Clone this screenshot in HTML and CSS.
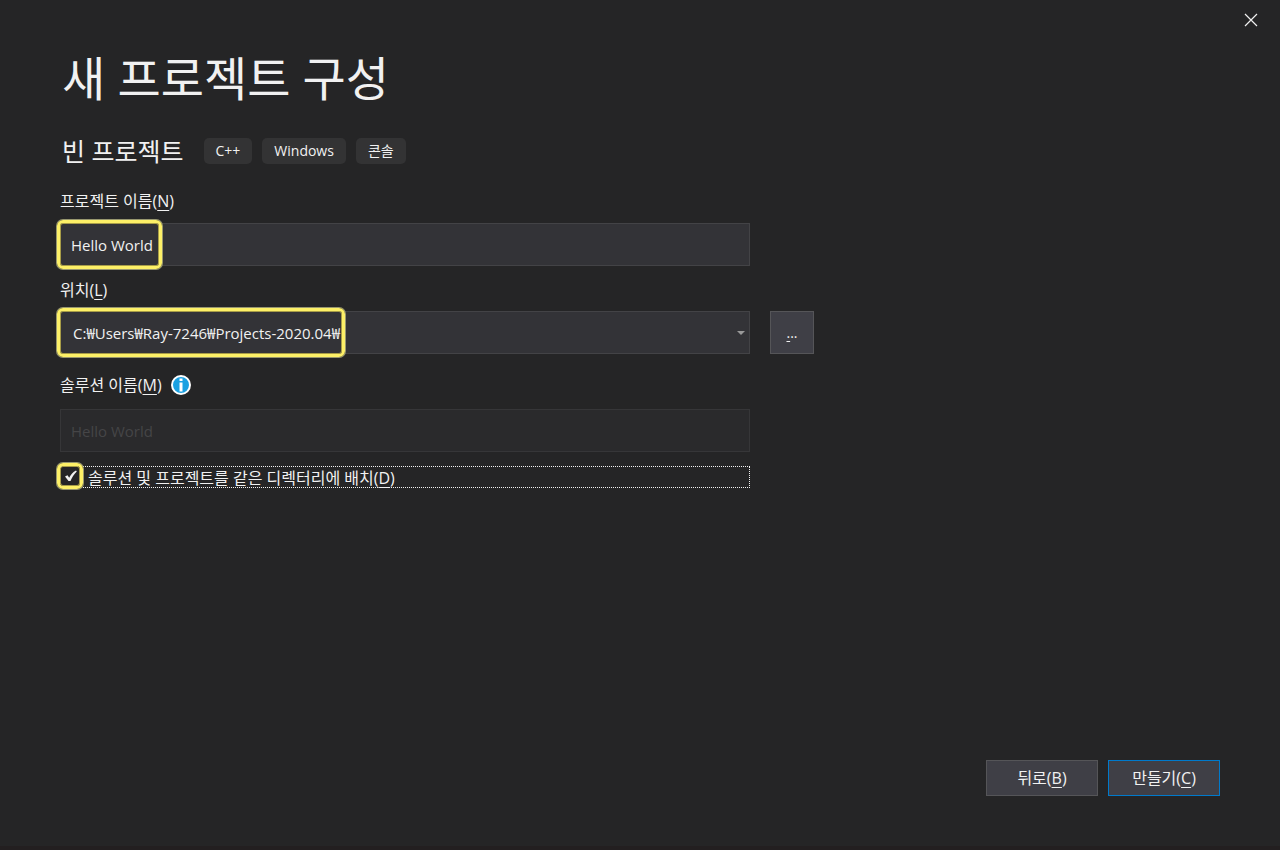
FILE: index.html
```
<!DOCTYPE html>
<html lang="ko">
<head>
    <meta charset="UTF-8">
    <meta name="viewport" content="width=device-width, initial-scale=1.0">
    <title>새 프로젝트 구성</title>
    <link rel="stylesheet" href="styles.css">
</head>
<body>
    <div class="titlebar">
        <button type="button" class="close-button" aria-label="닫기">
            <svg width="14" height="14" viewBox="0 0 14 14"><path d="M1 1l12 12M13 1L1 13"/></svg>
        </button>
    </div>

    <form class="dialog">
        <main class="content">
            <h1>새 프로젝트 구성</h1>

            <div class="template">
                <h2>빈 프로젝트</h2>
                <ul class="tags">
                    <li>C++</li>
                    <li>Windows</li>
                    <li>콘솔</li>
                </ul>
            </div>

            <div class="field">
                <label for="project-name">프로젝트 이름(<u>N</u>)</label>
                <div class="control">
                    <input type="text" class="box" id="project-name" value="Hello World">
                    <span class="highlight highlight-name"></span>
                </div>
            </div>

            <div class="field field-location">
                <label for="location">위치(<u>L</u>)</label>
                <div class="row">
                    <div class="control">
                        <select class="box" id="location">
                            <option>C:₩Users₩Ray-7246₩Projects-2020.04₩</option>
                        </select>
                        <svg class="arrow" width="8" height="4" viewBox="0 0 8 4"><path d="M0 0h8L4 4z"/></svg>
                        <span class="highlight highlight-location"></span>
                    </div>
                    <button type="button" class="button browse"><u>.</u>..</button>
                </div>
            </div>

            <div class="field field-solution">
                <div class="label-row">
                    <label for="solution-name">솔루션 이름(<u>M</u>)</label>
                    <svg class="info" width="20" height="20" viewBox="0 0 20 20">
                        <circle cx="10" cy="10" r="9"/>
                        <path d="M8.500 3.500h3v2.500h-3zM8.500 7.500h3v9h-3z"/>
                    </svg>
                </div>
                <div class="control">
                    <input type="text" class="box" id="solution-name" value="Hello World" disabled>
                </div>
            </div>

            <div class="check control">
                <input type="checkbox" id="same-dir" checked>
                <label for="same-dir">솔루션 및 프로젝트를 같은 디렉터리에 배치(<u>D</u>)</label>
                <svg class="tick" width="14" height="12" viewBox="0 0 14 12"><path d="M1 6.500L3.500 5.200l1.700 2.600C6.800 4.500 9 2 12 0.500L12.800 1.500C9.800 4.200 8 7.500 6.500 11H4.500z"/></svg>
                <span class="highlight highlight-check"></span>
            </div>
        </main>

        <footer class="actions">
            <button type="button" class="button">뒤로(<u>B</u>)</button>
            <button type="submit" class="button primary">만들기(<u>C</u>)</button>
        </footer>
    </form>
</body>
</html>
```

FILE: styles.css
```
* {
    margin: 0;
    padding: 0;
    box-sizing: border-box;
}

body {
    background-color: #252526;
    color: #f1f1f1;
    min-height: 100vh;
    display: flex;
    flex-direction: column;
    font: 16px/22px "Open Sans", "Noto Sans CJK KR", sans-serif;
    border-bottom: 4px solid #231f20;
}

button, input, select {
    font: inherit;
    color: inherit;
}

svg {
    display: block;
}

u {
    text-underline-offset: 3px;
    text-decoration-thickness: 1px;
}

.titlebar {
    display: flex;
    justify-content: flex-end;
    height: 40px;
    padding-right: 12px;
}

.close-button {
    width: 34px;
    display: flex;
    align-items: center;
    justify-content: center;
    background: none;
    border: none;
}

.close-button path {
    fill: none;
    stroke: #f1f1f1;
    stroke-width: 1.2;
}

.dialog {
    flex: 1;
    display: flex;
    flex-direction: column;
    justify-content: space-between;
    padding: 0 60px 50px;
}

h1, h2 {
    padding-left: 2px;
    font-weight: 400;
}

h1 {
    font-size: 47px;
    line-height: 76px;
}

.template {
    display: flex;
    align-items: center;
    gap: 20px;
    margin: 15px 0 19px;
}

h2 {
    font-size: 25px;
    line-height: 40px;
}

.tags {
    display: flex;
    gap: 10px;
    list-style: none;
}

.tags li {
    background: #333334;
    border-radius: 5px;
    padding: 0 12px;
    font-size: 14px;
    line-height: 26px;
}

.field {
    margin-top: 13px;
    max-width: 690px;
}

.field label {
    display: block;
}

.field .row {
    display: flex;
    gap: 20px;
}

.field-location {
    max-width: 754px;
}

.control {
    position: relative;
    flex: 1;
}

.field .control {
    margin-top: 11px;
}

.field .row {
    margin-top: 10px;
}

.field .row .control {
    margin-top: 0;
}

.field-solution {
    margin-top: 20px;
}

.field-solution .control {
    margin-top: 13px;
}

.box {
    display: block;
    width: 100%;
    height: 43px;
    padding: 0 10px;
    background: #333337;
    border: 1px solid #434346;
    border-radius: 0;
    font-size: 15px;
    appearance: none;
    outline: none;
}

select.box {
    padding-left: 12px;
}

.box:disabled {
    background: #2a2a2c;
    border-color: #363638;
    color: #454547;
    opacity: 1;
}

.arrow {
    position: absolute;
    right: 5px;
    top: 20px;
    fill: #999999;
    pointer-events: none;
}

.label-row {
    display: flex;
    align-items: center;
    gap: 9px;
}

.info circle {
    fill: #1ba1e2;
    stroke: #ffffff;
    stroke-width: 2;
}

.info path {
    fill: #ffffff;
}

.check {
    display: flex;
    align-items: center;
    gap: 8px;
    max-width: 690px;
    height: 22px;
    margin-top: 14px;
    border: 1px dotted #f1f1f1;
}

.check input {
    appearance: none;
    width: 19px;
    height: 20px;
    background: #252526;
    outline: none;
}

.check label {
    padding-top: 2px;
}

.tick {
    position: absolute;
    left: 3px;
    top: 3px;
    fill: #f1f1f1;
    pointer-events: none;
}

/* yellow marker frames over the controls */
.highlight {
    position: absolute;
    left: -3px;
    top: -3px;
    height: 49px;
    border: 3px solid #fdf067;
    border-radius: 6px;
    box-shadow: 0 0 0 1px #98976f, inset 0 0 0 1px #a89d48;
    pointer-events: none;
}

.highlight-name {
    width: 105px;
}

.highlight-location {
    width: 288px;
}

.highlight-check {
    left: -4px;
    top: -4px;
    width: 26px;
    height: 26px;
}

.actions {
    display: flex;
    justify-content: flex-end;
    gap: 10px;
}

.button {
    width: 112px;
    height: 36px;
    background: #3f3f46;
    border: 1px solid #555558;
}

.browse {
    width: 44px;
    height: 43px;
    font-size: 14px;
}

.primary {
    border-color: #007acc;
}
```
